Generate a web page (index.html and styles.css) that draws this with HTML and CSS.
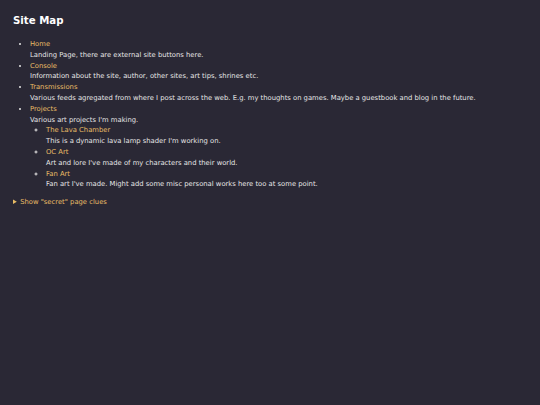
FILE: index.html
```html
<!DOCTYPE html>
<html>
<head>
<meta charset="utf-8">
<link rel="stylesheet" href="styles.css">
</head>
<body>
<main class="page">
  <h1 class="title">Site Map</h1>
  <ul class="map">
    <li><a href="#">Home</a><br>Landing Page, there are external site buttons here.</li>
    <li><a href="#">Console</a><br>Information about the site, author, other sites, art tips, shrines etc.</li>
    <li><a href="#">Transmissions</a><br>Various feeds agregated from where I post across the web. E.g. my thoughts on games. Maybe a guestbook and blog in the future.</li>
    <li><a href="#">Projects</a><br>Various art projects I'm making.
      <ul class="sub">
        <li><a href="#">The Lava Chamber</a><br>This is a dynamic lava lamp shader I'm working on.</li>
        <li><a href="#">OC Art</a><br>Art and lore I've made of my characters and their world.</li>
        <li><a href="#">Fan Art</a><br>Fan art I've made. Might add some misc personal works here too at some point.</li>
      </ul>
    </li>
  </ul>
  <details class="clues">
    <summary>Show "secret" page clues</summary>
  </details>
</main>
</body>
</html>
```
FILE: styles.css
```css
html, body {
  margin: 0;
  background: #2a2835;
}
body {
  font-family: "DejaVu Sans", Verdana, sans-serif;
  font-size: 6.8px;
  line-height: 10.8px;
  color: #e6e6e6;
}
.page {
  padding: 14px 13px;
}
.title {
  font-size: 10.2px;
  line-height: 13px;
  margin: 0 0 12px 0;
  color: #ffffff;
}
a {
  color: #e8bc66;
  text-decoration: none;
}
.map {
  margin: 0;
  padding-left: 17px;
  list-style: disc;
}
.sub {
  margin: 0;
  padding-left: 16px;
  list-style: circle;
}
.clues {
  margin-top: 7px;
  color: #e8bc66;
}
.clues summary {
  cursor: pointer;
}
```
